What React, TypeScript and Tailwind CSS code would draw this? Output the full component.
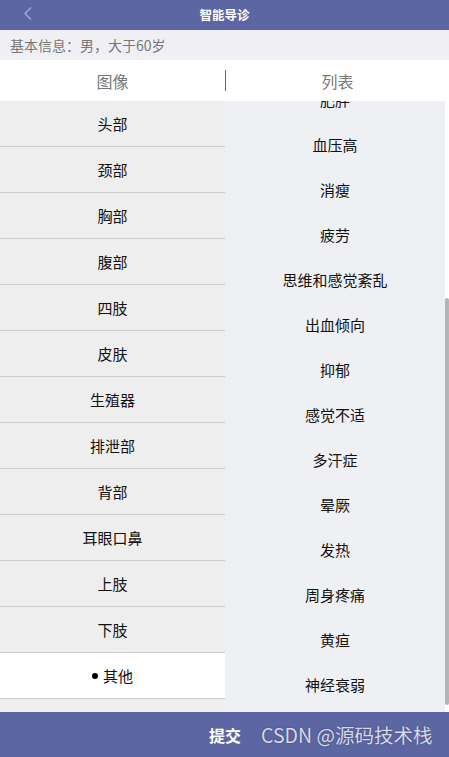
const PARTS = ['头部', '颈部', '胸部', '腹部', '四肢', '皮肤', '生殖器', '排泄部', '背部', '耳眼口鼻', '上肢', '下肢', '其他'];

const SYMPTOMS = [
  '肥胖',
  '血压高',
  '消瘦',
  '疲劳',
  '思维和感觉紊乱',
  '出血倾向',
  '抑郁',
  '感觉不适',
  '多汗症',
  '晕厥',
  '发热',
  '周身疼痛',
  '黄疸',
  '神经衰弱',
];

const FONT = { fontFamily: '"Microsoft YaHei", "Noto Sans CJK SC", "Noto Sans", sans-serif' };

export default function App() {
  const selected = '其他';

  return (
    <div className="flex h-[757px] w-full flex-col overflow-hidden bg-white" style={FONT}>
      {/* header */}
      <div className="relative flex h-[30px] shrink-0 items-center justify-center bg-[#5c66a3]">
        <svg className="absolute left-[22px] top-[6px]" width="12" height="16" viewBox="0 0 12 16">
          <polyline points="9,1.5 3,7.5 9,13.5" fill="none" stroke="#a8aed4" strokeWidth="1.2" />
        </svg>
        <span className="text-[12.5px] font-bold text-white">智能导诊</span>
      </div>

      {/* basic info */}
      <div className="flex h-[30px] shrink-0 items-center bg-[#f0f0f4] px-[10px] text-[14px] text-[#777]">
        基本信息：男，大于60岁
      </div>

      {/* tabs */}
      <div className="flex h-[41px] shrink-0 items-center bg-white text-[16px] text-[#777]">
        <div className="flex w-[225px] justify-center">图像</div>
        <div className="h-[21px] w-px bg-[#666]" />
        <div className="flex flex-1 justify-center">列表</div>
      </div>

      {/* body */}
      <div className="flex min-h-0 flex-1">
        <div className="w-[225px] shrink-0 bg-[#eeeeee]">
          {PARTS.map((p) => (
            <div
              key={p}
              className={`flex h-[46px] items-center justify-center border-b border-[#cccccc] pt-px text-[15px] text-[#111] ${
                p === selected ? 'bg-white' : ''
              }`}
            >
              {p === selected && <span className="mr-[5px] h-[6px] w-[6px] rounded-full bg-black" />}
              {p}
            </div>
          ))}
        </div>

        <div className="relative flex-1 overflow-hidden bg-[#eff0f4]">
          <div className="-mt-[23px]">
            {SYMPTOMS.map((s) => (
              <div key={s} className="flex h-[45px] items-center justify-center pr-[4px] text-[15px] text-[#111]">
                {s}
              </div>
            ))}
          </div>
          {/* scrollbar */}
          <div className="absolute right-0 top-0 bottom-0 w-[4px] bg-white">
            <div className="absolute left-0 top-[197px] h-[407px] w-[4px] rounded-sm bg-[#b5b5b5]" />
          </div>
        </div>
      </div>

      {/* footer */}
      <div className="flex h-[45px] shrink-0 items-center bg-[#5c66a3] pl-[209px]">
        <span className="text-[16px] font-bold text-white">提交</span>
        <span className="ml-[20px] text-[19.5px] text-[#d6d8e8] [text-shadow:0_0_2px_rgba(0,0,0,0.35)]">CSDN @源码技术栈</span>
      </div>
    </div>
  );
}
